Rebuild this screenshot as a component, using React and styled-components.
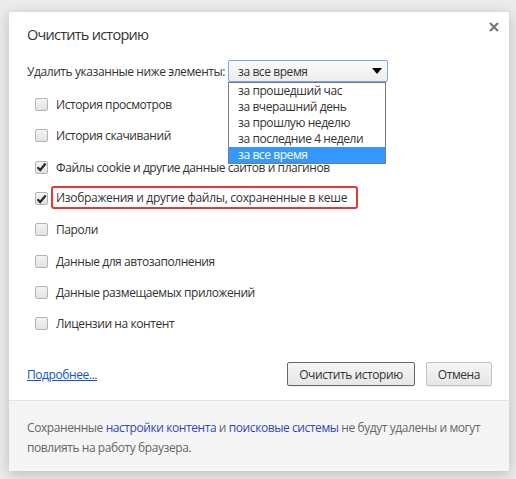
import React from 'react'
import styled, { createGlobalStyle } from 'styled-components'

const GlobalStyle = createGlobalStyle`
  html, body {
    margin: 0;
    padding: 0;
    background: #ececec;
    font-family: "Open Sans", "Noto Sans", sans-serif;
  }
`

const periods = [
  'за прошедший час',
  'за вчерашний день',
  'за прошлую неделю',
  'за последние 4 недели',
  'за все время',
]

const items = [
  { label: 'История просмотров', checked: false },
  { label: 'История скачиваний', checked: false },
  { label: 'Файлы cookie и другие данные сайтов и плагинов', checked: true },
  { label: 'Изображения и другие файлы, сохраненные в кеше', checked: true, marked: true },
  { label: 'Пароли', checked: false },
  { label: 'Данные для автозаполнения', checked: false },
  { label: 'Данные размещаемых приложений', checked: false },
  { label: 'Лицензии на контент', checked: false },
]

const Page = styled.div`
  width: 516px;
  height: 479px;
  padding: 12px 0 0 9px;
  box-sizing: border-box;
  overflow: hidden;
`

const Dialog = styled.div`
  width: 500px;
  height: 459px;
  background: #fff;
  border-radius: 2px;
  box-shadow: 0 3px 14px rgba(0, 0, 0, 0.22);
  display: flex;
  flex-direction: column;
  color: #333;
  font-size: 12px;
  letter-spacing: -0.42px;
`

const Header = styled.div`
  display: flex;
  justify-content: space-between;
  align-items: flex-start;
  padding: 12px 10px 0 18px;
`

const Title = styled.h1`
  margin: 0;
  font-size: 14.5px;
  font-weight: 400;
  line-height: 22px;
  letter-spacing: -0.75px;
  color: #333;
`

const Close = styled.svg`
  margin-top: -2px;
`

const Body = styled.div`
  padding: 0 18px;
  flex: 1;
`

const PeriodRow = styled.div`
  display: flex;
  align-items: center;
  gap: 3px;
  margin-top: 14px;
`

const SelectWrap = styled.div`
  position: relative;
`

const Select = styled.div`
  width: 160px;
  height: 22px;
  box-sizing: border-box;
  border: 1px solid #7aa7e9;
  border-radius: 2px;
  background: linear-gradient(#fafafa, #ededed);
  display: flex;
  align-items: center;
  justify-content: space-between;
  padding: 0 5px 0 9px;
  color: #333;
`

const Arrow = styled.span`
  width: 0;
  height: 0;
  border-left: 5px solid transparent;
  border-right: 5px solid transparent;
  border-top: 6px solid #000;
`

const Dropdown = styled.ul`
  position: absolute;
  top: 22px;
  left: 0;
  width: 158px;
  margin: 0;
  padding: 0;
  list-style: none;
  background: #fff;
  border: 1px solid #7a7a7a;
  box-sizing: border-box;
  z-index: 2;
`

const Option = styled.li`
  height: 16px;
  line-height: 16px;
  padding-left: 9px;
  background: ${({ $active }) => ($active ? '#3399ff' : 'transparent')};
  color: ${({ $active }) => ($active ? '#fff' : '#333')};
`

const List = styled.div`
  display: flex;
  flex-direction: column;
  padding-left: 8px;
  margin-top: 7px;
`

const Row = styled.label`
  display: flex;
  align-items: center;
  gap: 8px;
  height: 31.3px;
`

const Box = styled.span`
  width: 13px;
  height: 13px;
  box-sizing: border-box;
  border: 1px solid #b4b4b4;
  border-radius: 2px;
  background: linear-gradient(#f4f4f4, #e2e2e2);
  display: flex;
  align-items: center;
  justify-content: center;
  flex-shrink: 0;
`

const Label = styled.span`
  line-height: 17px;
  ${({ $marked }) =>
    $marked &&
    `
    border: 2px solid #e03a3a;
    border-radius: 3px;
    padding: 1px 9px 1px 3px;
    margin: -3px 0 0 -5px;
    letter-spacing: -0.3px;
  `}
`

const Actions = styled.div`
  display: flex;
  align-items: center;
  padding: 0 17px 14px 18px;
  gap: 11px;
`

const MoreLink = styled.a`
  color: #1155cc;
  text-decoration: underline;
  margin-right: auto;
`

const Button = styled.button`
  height: 24px;
  padding: 0 11px;
  font-family: inherit;
  font-size: 12px;
  letter-spacing: inherit;
  color: #333;
  border-radius: 2px;
  border: 1px solid ${({ $focused }) => ($focused ? '#666' : '#c4c4c4')};
  background: linear-gradient(#f6f6f6, #e6e6e6);
  box-shadow: 0 1px 0 rgba(0, 0, 0, 0.06);
`

const Footer = styled.div`
  background: #f5f5f5;
  border-top: 1px solid #e4e4e4;
  padding: 17px 18px 0;
  height: 71px;
  box-sizing: border-box;
  color: #666;
  line-height: 20px;
`

const FooterLink = styled.span`
  color: #3347b8;
`

const Check = () => (
  <svg width="11" height="10" viewBox="0 0 11 10">
    <path d="M1.5 5.2 L4.2 8 L9.6 1.5" fill="none" stroke="#2a2a2a" strokeWidth="2.2" />
  </svg>
)

export default function App() {
  return (
    <Page>
      <GlobalStyle />
      <Dialog>
        <Header>
          <Title>Очистить историю</Title>
          <Close width="10" height="10" viewBox="0 0 10 10">
            <path d="M1 1 L9 9 M9 1 L1 9" stroke="#777" strokeWidth="2.2" />
          </Close>
        </Header>
        <Body>
          <PeriodRow>
            <span>Удалить указанные ниже элементы:</span>
            <SelectWrap>
              <Select>
                <span>за все время</span>
                <Arrow />
              </Select>
              <Dropdown>
                {periods.map((p, i) => (
                  <Option key={p} $active={i === periods.length - 1}>{p}</Option>
                ))}
              </Dropdown>
            </SelectWrap>
          </PeriodRow>
          <List>
            {items.map((it) => (
              <Row key={it.label}>
                <Box>{it.checked && <Check />}</Box>
                <Label $marked={it.marked}>{it.label}</Label>
              </Row>
            ))}
          </List>
        </Body>
        <Actions>
          <MoreLink href="#">Подробнее...</MoreLink>
          <Button $focused>Очистить историю</Button>
          <Button>Отмена</Button>
        </Actions>
        <Footer>
          Сохраненные <FooterLink>настройки контента</FooterLink> и{' '}
          <FooterLink>поисковые системы</FooterLink> не будут удалены и могут
          повлиять на работу браузера.
        </Footer>
      </Dialog>
    </Page>
  )
}
